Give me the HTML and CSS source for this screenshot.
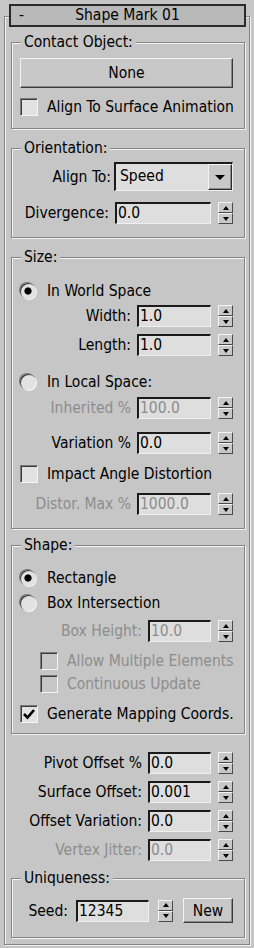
FILE: index.html
```html
<!DOCTYPE html>
<html>
<head>
  <meta charset="utf-8">
  <title>Shape Mark 01</title>
  <link rel="stylesheet" href="styles.css">
</head>
<body>
  <div class="rollout">
    <div class="rollout-head">
      <span class="toggle">-</span>
      <span class="title">Shape Mark 01</span>
      <span class="toggle"></span>
    </div>

    <fieldset class="group g-contact">
      <legend>Contact Object:</legend>
      <div class="btn btn-wide">None</div>
      <div class="check mt9"><span class="box"></span>Align To Surface Animation</div>
    </fieldset>

    <fieldset class="group g-orient">
      <legend>Orientation:</legend>
      <div class="row row-select mt6">
        <span class="lbl">Align To:</span>
        <div class="select">
          <span class="select-value">Speed</span>
          <span class="select-btn"><i class="tri-down"></i></span>
        </div>
      </div>
      <div class="row mt11">
        <span class="lbl">Divergence:</span>
        <div class="field w96">0.0</div>
        <div class="spin"><span class="up"></span><span class="dn"></span></div>
      </div>
    </fieldset>

    <fieldset class="group g-size">
      <legend>Size:</legend>
      <div class="radio-row mt16"><span class="radio on"></span>In World Space</div>
      <div class="row mt4">
        <span class="lbl">Width:</span>
        <div class="field w74">1.0</div>
        <div class="spin"><span class="up"></span><span class="dn"></span></div>
      </div>
      <div class="row mt7">
        <span class="lbl">Length:</span>
        <div class="field w74">1.0</div>
        <div class="spin"><span class="up"></span><span class="dn"></span></div>
      </div>
      <div class="radio-row mt16"><span class="radio"></span>In Local Space:</div>
      <div class="row mt5 off">
        <span class="lbl">Inherited %</span>
        <div class="field w74">100.0</div>
        <div class="spin"><span class="up"></span><span class="dn"></span></div>
      </div>
      <div class="row mt13">
        <span class="lbl">Variation %</span>
        <div class="field w74">0.0</div>
        <div class="spin"><span class="up"></span><span class="dn"></span></div>
      </div>
      <div class="check mt10"><span class="box"></span>Impact Angle Distortion</div>
      <div class="row mt9 off">
        <span class="lbl">Distor. Max %</span>
        <div class="field w74">1000.0</div>
        <div class="spin"><span class="up"></span><span class="dn"></span></div>
      </div>
    </fieldset>

    <fieldset class="group g-shape">
      <legend>Shape:</legend>
      <div class="radio-row mt15"><span class="radio on"></span>Rectangle</div>
      <div class="radio-row mt5"><span class="radio"></span>Box Intersection</div>
      <div class="row mt7 off">
        <span class="lbl">Box Height:</span>
        <div class="field w63">10.0</div>
        <div class="spin"><span class="up"></span><span class="dn"></span></div>
      </div>
      <div class="check sub mt9 off"><span class="box"></span>Allow Multiple Elements</div>
      <div class="check sub mt3 off"><span class="box"></span>Continuous Update</div>
      <div class="check mt10">
        <span class="box"><svg width="14" height="14" viewBox="0 0 14 14"><path d="M2 7 L5.5 10.5 L12 3" fill="none" stroke="#000" stroke-width="2.6"/></svg></span>Generate Mapping Coords.
      </div>
    </fieldset>

    <div class="plain">
      <div class="row">
        <span class="lbl">Pivot Offset %</span>
        <div class="field w63">0.0</div>
        <div class="spin"><span class="up"></span><span class="dn"></span></div>
      </div>
      <div class="row mt7">
        <span class="lbl">Surface Offset:</span>
        <div class="field w63">0.001</div>
        <div class="spin"><span class="up"></span><span class="dn"></span></div>
      </div>
      <div class="row mt7">
        <span class="lbl">Offset Variation:</span>
        <div class="field w63">0.0</div>
        <div class="spin"><span class="up"></span><span class="dn"></span></div>
      </div>
      <div class="row mt7 off">
        <span class="lbl">Vertex Jitter:</span>
        <div class="field w63">0.0</div>
        <div class="spin"><span class="up"></span><span class="dn"></span></div>
      </div>
    </div>

    <fieldset class="group g-unique">
      <legend>Uniqueness:</legend>
      <div class="row row-seed mt12">
        <span class="lbl">Seed:</span>
        <div class="field w73">12345</div>
        <div class="spin"><span class="up"></span><span class="dn"></span></div>
        <div class="btn btn-new">New</div>
      </div>
    </fieldset>
  </div>
</body>
</html>
```

FILE: styles.css
```css
*{margin: 0;padding: 0;box-sizing: border-box;}
html, body{
  width: 100%;
  height: 100%;
  background-color: #c6c6c6;
  color: #000;
  font-family: "DejaVu Sans Condensed", "DejaVu Sans", sans-serif;
  font-size: 15.5px;
  font-stretch: condensed;
}

/* rollout frame */
.rollout{
  margin: 16px 0 0 4px;
  width: 246px;
  padding-bottom: 6px;
  border: 1px solid #858585;
  box-shadow: inset 1px 1px 0 #f2f2f2, 1px 1px 0 #f2f2f2;
}
.rollout-head{
  display: flex;
  align-items: center;
  height: 23px;
  margin: -13px 3px 0 4px;
  padding: 0 5px;
  background-color: #b9b9b9;
  border: 2px solid #2a2a2a;
  line-height: 19px;
}
.toggle{
  width: 14px;
  padding-left: 3px;
}
.title{
  flex: 1;
  text-align: center;
}

/* group boxes */
.group{
  margin: 11px 4px 0 6px;
  padding: 0 11px 13px 8px;
  min-width: 0;
  border: 1px solid #858585;
  box-shadow: inset 1px 1px 0 #f2f2f2, 1px 1px 0 #f2f2f2;
}
.group legend{
  padding: 0 3px;
  margin-left: 1px;
  line-height: 16px;
  background-color: #c6c6c6;
}
.g-contact{ margin-top: 7px; padding-bottom: 11px; }
.g-shape{ margin-top: 8px; padding-bottom: 9px; }
.g-unique{ margin-top: 9px; padding-bottom: 14px; }

.plain{
  margin-top: 18px;
  padding-right: 16px;
}

.mt3{ margin-top: 3px; }
.mt4{ margin-top: 4px; }
.mt5{ margin-top: 5px; }
.mt6{ margin-top: 6px; }
.mt7{ margin-top: 7px; }
.mt9{ margin-top: 9px; }
.mt10{ margin-top: 10px; }
.mt11{ margin-top: 11px; }
.mt12{ margin-top: 12px; }
.mt13{ margin-top: 13px; }
.mt15{ margin-top: 15px; }
.mt16{ margin-top: 16px; }

/* buttons */
.btn{
  display: flex;
  align-items: center;
  justify-content: center;
  background-color: #c8c8c8;
  border: 1px solid;
  border-color: #f4f4f4 #3a3a3a #3a3a3a #f4f4f4;
  box-shadow: inset -1px -1px 0 #8a8a8a;
}
.btn-wide{
  margin-top: 8px;
  height: 30px;
}
.btn-new{
  width: 50px;
  height: 25px;
  margin-left: 10px;
}

/* checkboxes and radios */
.check, .radio-row{
  display: flex;
  align-items: center;
  height: 20px;
  white-space: nowrap;
}
.box{
  display: flex;
  flex-shrink: 0;
  align-items: center;
  justify-content: center;
  width: 18px;
  height: 18px;
  margin-right: 9px;
  background-color: #e2e2e2;
  border: 1px solid;
  border-color: #7a7a7a #f4f4f4 #f4f4f4 #7a7a7a;
  box-shadow: inset 1px 1px 0 #3a3a3a;
}
.check.sub{
  padding-left: 20px;
}
.radio{
  flex-shrink: 0;
  width: 16px;
  height: 16px;
  margin-right: 11px;
  border-radius: 50%;
  background-color: #e2e2e2;
  box-shadow: inset 1px 1px 0 #3a3a3a, -1px -1px 0 #7a7a7a, 1px 1px 0 #f4f4f4;
}
.radio.on{
  background: radial-gradient(circle, #000 0, #000 3.2px, #e2e2e2 4px);
}

/* spinner rows */
.row{
  display: flex;
  align-items: center;
  justify-content: flex-end;
  height: 22px;
}
.row .lbl{
  margin-right: 6px;
  white-space: nowrap;
}
.row-select{ height: 29px; }
.row-select .lbl{ margin-right: 3px; }
.row-seed{
  height: 25px;
  justify-content: flex-end;
}
.row-seed .lbl{ margin-right: 8px; }
.row-seed .spin{ margin-left: 9px; }

.field{
  height: 22px;
  padding-left: 1px;
  line-height: 19px;
  background-color: #dedede;
  border-style: solid;
  border-width: 2px 1px 1px 2px;
  border-color: #1a1a1a #f0f0f0 #f0f0f0 #1a1a1a;
  white-space: nowrap;
  overflow: hidden;
}
.w63{ width: 63px; }
.w73{ width: 73px; }
.w74{ width: 74px; }
.w96{ width: 96px; }

.off, .off .field{
  color: #8d8d8d;
}
.check.off .box{
  background-color: #c6c6c6;
}

.spin{
  display: flex;
  flex-direction: column;
  width: 15px;
  height: 22px;
  margin-left: 7px;
}
.spin span{
  flex: 1;
  display: flex;
  align-items: center;
  justify-content: center;
  background-color: #c8c8c8;
  border: 1px solid;
  border-color: #f4f4f4 #4a4a4a #4a4a4a #f4f4f4;
}
.spin span::before{
  content: "";
  border-left: 3px solid transparent;
  border-right: 3px solid transparent;
}
.spin .up::before{ border-bottom: 4px solid #000; }
.spin .dn::before{ border-top: 4px solid #000; }

/* dropdown */
.select{
  display: flex;
  width: 119px;
  height: 29px;
  background-color: #dedede;
  border-style: solid;
  border-width: 2px 1px 1px 2px;
  border-color: #1a1a1a #f0f0f0 #f0f0f0 #1a1a1a;
}
.select-value{
  flex: 1;
  padding-left: 4px;
  line-height: 25px;
}
.select-btn{
  display: flex;
  align-items: center;
  justify-content: center;
  width: 24px;
  background-color: #c8c8c8;
  border: 1px solid;
  border-color: #f4f4f4 #2a2a2a #2a2a2a #f4f4f4;
  box-shadow: inset -1px -1px 0 #8a8a8a;
}
.tri-down{
  border-left: 5px solid transparent;
  border-right: 5px solid transparent;
  border-top: 5px solid #000;
}
```
